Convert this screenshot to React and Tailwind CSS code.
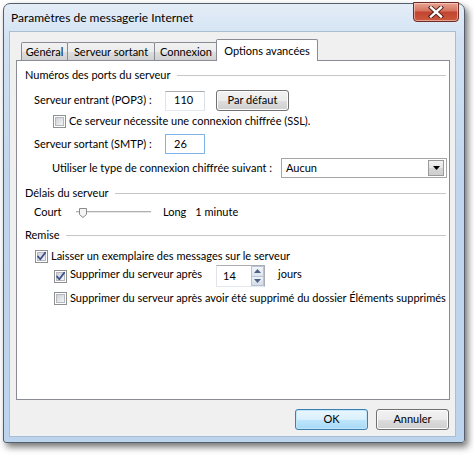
import React from "react";

const F = { fontFamily: 'Lato, "Noto Sans", sans-serif' };

function Checkbox({ checked }) {
  return (
    <svg width="13" height="13" viewBox="0 0 13 13" className="shrink-0">
      <defs>
        <linearGradient id="cbg" x1="0" y1="0" x2="1" y2="1">
          <stop offset="0" stopColor="#cbcfd5" />
          <stop offset="1" stopColor="#f6f6f6" />
        </linearGradient>
      </defs>
      <rect x="0.5" y="0.5" width="12" height="12" fill="#fff" stroke="#8e8f8f" />
      <rect x="2.5" y="2.5" width="8" height="8" fill="url(#cbg)" stroke="#b5b8c0" strokeWidth="1" />
      {checked && (
        <path d="M3 6.5 L5.3 9.3 L10.2 2.8" fill="none" stroke="#3b4f8c" strokeWidth="1.8" strokeLinejoin="round" strokeLinecap="round" />
      )}
    </svg>
  );
}

function WinButton({ children, def, className }) {
  return (
    <div
      className={
        "h-[21px] w-[73px] rounded-[3px] border flex items-center justify-center text-[11px] text-black whitespace-nowrap " +
        (def
          ? "border-[#3c7fb1] bg-[linear-gradient(#eaf6fd_0%,#d9f0fc_50%,#bee6fd_51%,#a7d9f5_100%)] shadow-[inset_0_0_0_1px_#c1e5fb]"
          : "border-[#707070] bg-[linear-gradient(#f2f2f2_0%,#ebebeb_50%,#dddddd_51%,#cfcfcf_100%)] shadow-[inset_0_0_0_1px_#fcfcfc]") +
        " " +
        (className || "")
      }
    >
      {children}
    </div>
  );
}

function TextBox({ value, w, focus }) {
  return (
    <div
      className={
        "h-[20px] bg-white border flex items-center pl-[8px] text-[11px] shrink-0 " +
        (focus ? "border-[#7eb4ea]" : "border-[#abadb3] border-l-[#e2e3ea] border-r-[#dbdfe6] border-b-[#e3e9ef]")
      }
      style={{ width: w }}
    >
      {value}
    </div>
  );
}

function GroupHeader({ children }) {
  return (
    <div className="flex items-center h-[16px] pl-[8px] pr-[3px]">
      <span className="text-[11px] text-black whitespace-nowrap">{children}</span>
      <div className="flex-1 ml-[6px] border-t border-[#c6c6c6] shadow-[0_1px_0_#ffffff]" />
    </div>
  );
}

function Tab({ children, w, selected }) {
  if (selected) {
    return (
      <div
        className="relative z-10 -ml-[2px] -mr-[2px] h-[22px] bg-white border border-[#898c95] border-b-0 rounded-t-[2px] flex items-start justify-center pt-[3px] text-[11px] whitespace-nowrap"
        style={{ width: w }}
      >
        {children}
      </div>
    );
  }
  return (
    <div
      className="mt-[2px] h-[19px] border border-[#898c95] border-b-0 -ml-[1px] first:ml-0 rounded-t-[2px] bg-[linear-gradient(#f2f2f2_0%,#ebebeb_50%,#dddddd_51%,#cfcfcf_100%)] flex items-center justify-center text-[11px] whitespace-nowrap"
      style={{ width: w }}
    >
      {children}
    </div>
  );
}

export default function App() {
  return (
    <div className="w-[474px] h-[456px] bg-white pt-[3px] pl-[3px] overflow-hidden text-black" style={F}>
      <div className="w-[462px] h-[440px] rounded-t-[7px] rounded-b-[3px] border border-[#565f6b] bg-[linear-gradient(180deg,#e4edf7_0%,#d2e2f3_8%,#c0d6ee_40%,#bcd4ed_100%)] shadow-[3px_4px_7px_rgba(0,0,0,0.55)] flex flex-col">
        {/* title bar */}
        <div className="h-[27px] flex items-start justify-between">
          <span className="mt-[6px] ml-[7px] text-[12px] leading-[16px] text-black whitespace-nowrap">
            Paramètres de messagerie Internet
          </span>
          <div className="-mt-[2px] mr-[5px] w-[46px] h-[20px] rounded-b-[4px] border border-[#6d2c26] bg-[linear-gradient(#e8a493_0%,#d5735f_45%,#c2432f_50%,#cc5a3e_100%)] shadow-[inset_0_0_0_1px_rgba(255,220,210,0.55)] flex items-center justify-center">
            <svg width="16" height="12" viewBox="0 0 16 12">
              <path d="M3 1.5 L13 10.5 M13 1.5 L3 10.5" stroke="#4a1a14" strokeWidth="4.2" strokeLinecap="square" />
              <path d="M3 1.5 L13 10.5 M13 1.5 L3 10.5" stroke="#ffffff" strokeWidth="2.4" strokeLinecap="square" />
            </svg>
          </div>
        </div>
        {/* client */}
        <div className="ml-[5px] w-[447px] h-[406px] bg-[#f0f0f0] border border-[#a9bdd3] flex flex-col">
          {/* tabs */}
          <div className="flex items-end pt-[8px] pl-[11px] h-[29px]">
            <Tab w={47}>Général</Tab>
            <Tab w={88}>Serveur sortant</Tab>
            <Tab w={64}>Connexion</Tab>
            <Tab w={102} selected>Options avancées</Tab>
          </div>
          {/* panel */}
          <div className="ml-[6px] -mt-[1px] w-[434px] h-[340px] bg-white border border-[#898c95] flex flex-col text-[11px] pt-[6px]">
            <GroupHeader>Numéros des ports du serveur</GroupHeader>
            <div className="mt-[7px] h-[21px] flex items-center pl-[17px]">
              <span className="w-[131px] whitespace-nowrap">Serveur entrant (POP3) :</span>
              <TextBox value="110" w={40} />
              <WinButton className="ml-[11px]">Par défaut</WinButton>
            </div>
            <div className="mt-[3px] h-[14px] flex items-center pl-[36px] gap-[3px]">
              <Checkbox />
              <span className="whitespace-nowrap">Ce serveur nécessite une connexion chiffrée (SSL).</span>
            </div>
            <div className="mt-[6px] h-[20px] flex items-center pl-[17px]">
              <span className="w-[131px] whitespace-nowrap">Serveur sortant (SMTP) :</span>
              <TextBox value="26" w={40} focus />
            </div>
            <div className="mt-[4px] h-[20px] flex items-center pl-[35px]">
              <span className="w-[229px] whitespace-nowrap">Utiliser le type de connexion chiffrée suivant :</span>
              <div className="w-[166px] h-[20px] border border-[#a5a5a5] bg-white flex items-center justify-between pl-[4px] pr-[2px]">
                <span>Aucun</span>
                <div className="w-[16px] h-[16px] border border-[#9a9a9a] bg-[linear-gradient(#f2f2f2_0%,#e6e6e6_50%,#d6d6d6_51%,#cfcfcf_100%)] flex items-center justify-center">
                  <svg width="7" height="4" viewBox="0 0 7 4">
                    <path d="M0 0 L7 0 L3.5 4 Z" fill="#000" />
                  </svg>
                </div>
              </div>
            </div>
            <div className="mt-[7px]">
              <GroupHeader>Délais du serveur</GroupHeader>
            </div>
            <div className="mt-[3px] h-[16px] flex items-center pl-[17px]">
              <span className="w-[42px]">Court</span>
              <svg width="76" height="14" viewBox="0 0 76 14" className="shrink-0">
                <line x1="0" y1="6.5" x2="75" y2="6.5" stroke="#b0b0b0" />
                <line x1="0" y1="7.5" x2="75" y2="7.5" stroke="#e6e6e6" />
                <path d="M3.5 3.5 L10.5 3.5 L10.5 9.5 L7 12.5 L3.5 9.5 Z" fill="#f4f4f4" stroke="#8a8a8a" />
              </svg>
              <span className="ml-[11px]">Long</span>
              <span className="ml-[9px] whitespace-nowrap">1 minute</span>
            </div>
            <div className="mt-[7px]">
              <GroupHeader>Remise</GroupHeader>
            </div>
            <div className="mt-[6px] h-[14px] flex items-center pl-[18px] gap-[3px]">
              <Checkbox checked />
              <span className="whitespace-nowrap">Laisser un exemplaire des messages sur le serveur</span>
            </div>
            <div className="mt-[2px] h-[22px] flex items-center pl-[37px]">
              <Checkbox checked />
              <span className="ml-[3px] w-[146px] -mt-[3px] whitespace-nowrap">Supprimer du serveur après</span>
              <div className="h-[22px] w-[49px] flex border border-[#abadb3] border-l-[#e2e3ea] border-b-[#e3e9ef] bg-white">
                <span className="flex-1 flex items-center pl-[6px]">14</span>
                <div className="w-[13px] flex flex-col">
                  <div className="flex-1 border border-[#b8c4d6] bg-[linear-gradient(#f3f6fa,#dbe3ee)] flex items-center justify-center">
                    <svg width="7" height="4" viewBox="0 0 7 4"><path d="M0 4 L7 4 L3.5 0 Z" fill="#4d6185" /></svg>
                  </div>
                  <div className="flex-1 border border-t-0 border-[#b8c4d6] bg-[linear-gradient(#eef2f7,#d3dce8)] flex items-center justify-center">
                    <svg width="7" height="4" viewBox="0 0 7 4"><path d="M0 0 L7 0 L3.5 4 Z" fill="#4d6185" /></svg>
                  </div>
                </div>
              </div>
              <span className="ml-[13px] -mt-[3px]">jours</span>
            </div>
            <div className="mt-[4px] h-[14px] flex items-center pl-[37px] gap-[3px]">
              <Checkbox />
              <span className="whitespace-nowrap">Supprimer du serveur après avoir été supprimé du dossier Éléments supprimés</span>
            </div>
          </div>
          {/* buttons */}
          <div className="mt-[9px] flex justify-end gap-[8px] pr-[6px]">
            <WinButton def>OK</WinButton>
            <WinButton>Annuler</WinButton>
          </div>
        </div>
      </div>
    </div>
  );
}
